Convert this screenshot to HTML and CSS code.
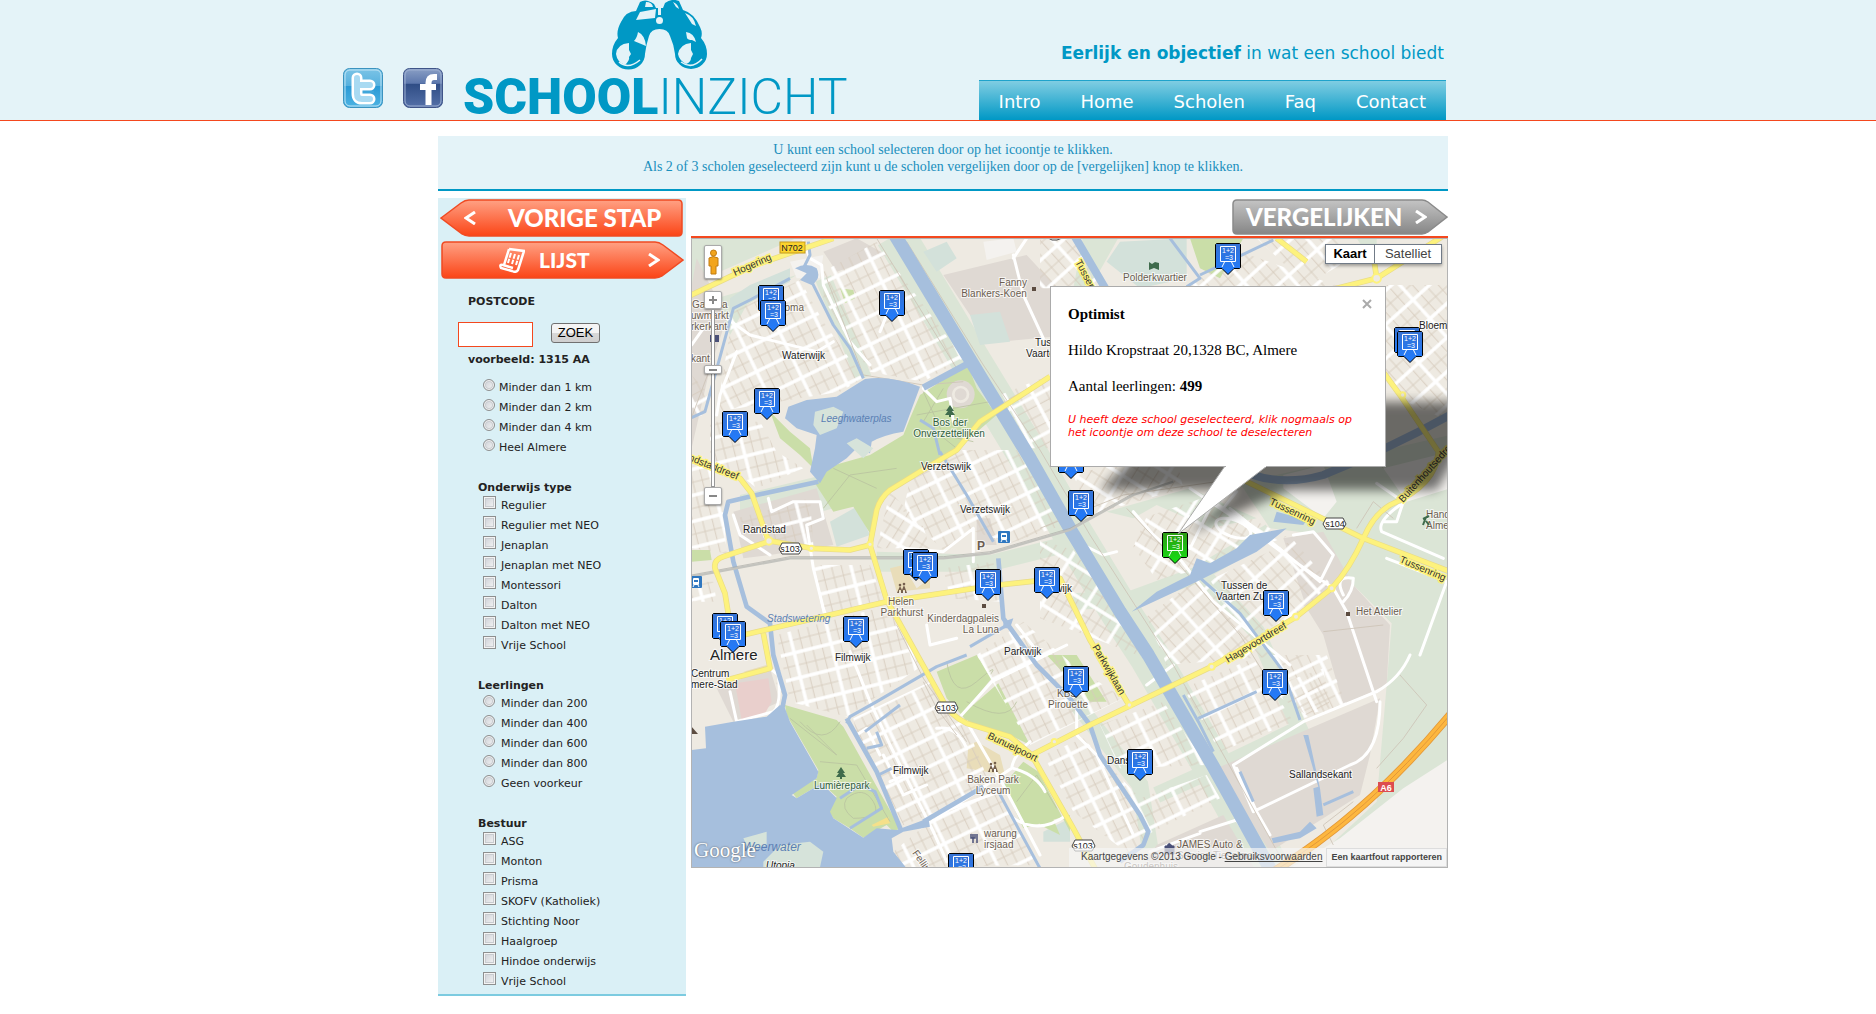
FILE: index.html
```html
<!DOCTYPE html>
<html lang="nl">
<head>
<meta charset="utf-8">
<title>Schoolinzicht</title>
<link rel="stylesheet" href="styles.css">
</head>
<body>
<header class="header">
  <div class="header-inner">
    <div class="social">
      <a href="#" aria-label="Twitter">
        <svg width="40" height="40" viewBox="0 0 40 40">
          <defs><linearGradient id="tw" x2="0" y2="1"><stop offset="0" stop-color="#7cc4e6"/><stop offset=".45" stop-color="#55b0de"/><stop offset=".46" stop-color="#2a9ad6"/><stop offset="1" stop-color="#4db3e2"/></linearGradient></defs>
          <rect x=".5" y=".5" width="39" height="39" rx="6" fill="url(#tw)" stroke="#3b93bf"/>
          <rect x="2" y="2" width="36" height="36" rx="5" fill="none" stroke="#bfe4f5"/>
          <path d="M14 10V26Q14 31 19 31H27M14 17H27" fill="none" stroke="#fff" stroke-width="11" stroke-linecap="round"/>
          <path d="M14 10V26Q14 31 19 31H27M14 17H27" fill="none" stroke="#a9daf2" stroke-width="6" stroke-linecap="round"/>
          <path d="M20 24H31" stroke="#3fa6da" stroke-width="2"/>
        </svg>
      </a>
      <a href="#" aria-label="Facebook">
        <svg width="40" height="40" viewBox="0 0 40 40">
          <defs><linearGradient id="fb" x2="0" y2="1"><stop offset="0" stop-color="#8a9fc5"/><stop offset=".38" stop-color="#5c77ac"/><stop offset=".4" stop-color="#2f4d85"/><stop offset="1" stop-color="#5470a8"/></linearGradient></defs>
          <rect x=".5" y=".5" width="39" height="39" rx="6" fill="url(#fb)" stroke="#3f5488"/>
          <rect x="2" y="2" width="36" height="36" rx="5" fill="none" stroke="#9eb0d2"/>
          <path d="M25.500 37V15Q25.500 9 31 9H34M17 19H33" fill="none" stroke="#fff" stroke-width="6"/>
        </svg>
      </a>
    </div>
    <a class="logo" href="#" aria-label="Schoolinzicht">
      <svg width="390" height="120" viewBox="0 0 390 120">
        <g transform="translate(148 0)">
          <path fill="#0098c5" d="M0 54Q0 45 6 38Q4 31 9 22Q14 11 24 11L28 2Q34-2 42 4L44 8H51L53 3Q60-2 67 1L71 10Q82 13 88 27Q91 33 89 38Q95 45 95 54A16 15 0 0 1 63 54Q62 45 58 36Q56 29 47.500 29Q39 29 37 36Q34 45 33 54A16 15 0 0 1 0 54Z"/>
          <path fill="#e4f3f8" d="M28 12L44 9L43 18L24 20ZM34 2Q40 2 41 7L33 7ZM46 8H49V15H46ZM26 32Q33 35 34 46L22 41Q25 38 26 32ZM74 32Q82 33 84 42L80 40Q76 40 75 38ZM61 2Q66 4 67 9L64 7ZM73 13Q82 16 84 26L80 24ZM17 43Q5 44 4 54Q5 62 13 65Q18 60 17 57L19 54L17 50ZM79 43Q68 44 66 54Q67 60 74 64Q79 62 79 58L81 54L79 50Z"/>
          <circle cx="47.500" cy="20.500" r="3.500" fill="#e4f3f8"/>
          <path d="M7 62Q16 70 28 60M69 62Q80 70 90 59" fill="none" stroke="#e4f3f8" stroke-width="1.500"/>
        </g>
        <text class="logo-text" x="-1" y="114"><tspan class="logo-bold">SCHOOL</tspan><tspan class="logo-light">INZICHT</tspan></text>
      </svg>
    </a>
    <div class="header-right">
      <p class="tagline"><strong>Eerlijk en objectief</strong> in wat een school biedt</p>
      <nav class="nav"><a href="#">Intro</a><a href="#">Home</a><a href="#">Scholen</a><a href="#">Faq</a><a href="#">Contact</a></nav>
    </div>
  </div>
</header>

<main class="page">
  <p class="notice">U kunt een school selecteren door op het icoontje te klikken.<br>Als 2 of 3 scholen geselecteerd zijn kunt u de scholen vergelijken door op de [vergelijken] knop te klikken.</p>
  <div class="columns">
    <form class="sidebar">
      <button type="button" class="arrow arrow-back">
        <svg class="arrow-shape" width="243" height="38" viewBox="0 0 243 38"><defs><linearGradient id="red" x2="0" y2="1"><stop offset="0" stop-color="#ffa184"/><stop offset="1" stop-color="#fb4416"/></linearGradient></defs><path d="M1 19L21 4Q25 1 29 1H238Q242 1 242 5V33Q242 37 238 37H29Q25 37 22 35Z" fill="url(#red)" stroke="#f04a22" stroke-width="1.500"/></svg>
        <svg width="12" height="14" viewBox="0 0 12 14"><path d="M11 1L2 7L11 13" fill="none" stroke="#fff" stroke-width="3"/></svg>
        <span>VORIGE STAP</span>
      </button>
      <button type="button" class="arrow arrow-list">
        <svg class="arrow-shape" width="243" height="38" viewBox="0 0 243 38"><path d="M242 19L222 4Q218 1 214 1H5Q1 1 1 5V33Q1 37 5 37H214Q218 37 221 35Z" fill="url(#red)" stroke="#f04a22" stroke-width="1.500"/></svg>
        <svg width="26" height="26" viewBox="0 0 26 26" fill="none" stroke="#fff"><path d="M10 2L25 4L19 23Q17 26 13 24L2 21Q0 17 4 18L14 21M10 2L5 18" stroke-width="2.500"/><path d="M12 6L9 16M16 7L13 17M20 8L17 18" stroke-width="2" stroke-dasharray="5 1"/></svg>
        <span>LIJST</span>
        <svg class="push" width="12" height="14" viewBox="0 0 12 14"><path d="M1 1L10 7L1 13" fill="none" stroke="#fff" stroke-width="3"/></svg>
      </button>
      <label class="postcode-label" for="postcode">POSTCODE</label>
      <div class="search"><input class="postcode" id="postcode" type="text"><button type="button" class="zoek">ZOEK</button></div>
      <p class="example">voorbeeld: 1315 AA</p>
      <fieldset class="filter filter-distance">
        <label><input type="radio" name="km">Minder dan 1 km</label>
        <label><input type="radio" name="km">Minder dan 2 km</label>
        <label><input type="radio" name="km">Minder dan 4 km</label>
        <label><input type="radio" name="km">Heel Almere</label>
      </fieldset>
      <fieldset class="filter">
        <legend>Onderwijs type</legend>
        <label><input type="checkbox">Regulier</label>
        <label><input type="checkbox">Regulier met NEO</label>
        <label><input type="checkbox">Jenaplan</label>
        <label><input type="checkbox">Jenaplan met NEO</label>
        <label><input type="checkbox">Montessori</label>
        <label><input type="checkbox">Dalton</label>
        <label><input type="checkbox">Dalton met NEO</label>
        <label><input type="checkbox">Vrije School</label>
      </fieldset>
      <fieldset class="filter">
        <legend>Leerlingen</legend>
        <label><input type="radio" name="size">Minder dan 200</label>
        <label><input type="radio" name="size">Minder dan 400</label>
        <label><input type="radio" name="size">Minder dan 600</label>
        <label><input type="radio" name="size">Minder dan 800</label>
        <label><input type="radio" name="size">Geen voorkeur</label>
      </fieldset>
      <fieldset class="filter">
        <legend>Bestuur</legend>
        <label><input type="checkbox">ASG</label>
        <label><input type="checkbox">Monton</label>
        <label><input type="checkbox">Prisma</label>
        <label><input type="checkbox">SKOFV (Katholiek)</label>
        <label><input type="checkbox">Stichting Noor</label>
        <label><input type="checkbox">Haalgroep</label>
        <label><input type="checkbox">Hindoe onderwijs</label>
        <label><input type="checkbox">Vrije School</label>
      </fieldset>
    </form>

    <section class="content">
      <div class="toolbar">
        <button type="button" class="arrow arrow-compare">
          <svg class="arrow-shape" width="216" height="36" viewBox="0 0 216 36"><defs><linearGradient id="grey" x2="0" y2="1"><stop offset="0" stop-color="#c4c4c4"/><stop offset="1" stop-color="#868686"/></linearGradient></defs><path d="M215 18L196 3Q193 1 190 1H5Q1 1 1 5V31Q1 35 5 35H190Q193 35 196 33Z" fill="url(#grey)" stroke="#8a8a8a" stroke-width="1.500"/></svg>
          <span>VERGELIJKEN</span>
          <svg width="12" height="14" viewBox="0 0 12 14"><path d="M1 1L10 7L1 13" fill="none" stroke="#fff" stroke-width="3"/></svg>
        </button>
      </div>
      <div class="map">
        <svg class="map-canvas" viewBox="0 0 757 630" preserveAspectRatio="xMinYMin slice">
          <defs>
            <g id="tile"><path d="M0 38H114M28 0V76M57 0V76M86 0V76" stroke="#d5cbbd" stroke-width="2.500"/><path d="M0 0H114M0 76H114M0 0V76M114 0V76" stroke="#fff" stroke-width="10"/></g>
            <pattern id="pa" width="114" height="76" patternUnits="userSpaceOnUse" patternTransform="rotate(-26)"><use href="#tile"/></pattern>
            <pattern id="pb" width="114" height="76" patternUnits="userSpaceOnUse" patternTransform="rotate(-14)"><use href="#tile"/></pattern>
            <pattern id="pc" width="114" height="76" patternUnits="userSpaceOnUse" patternTransform="rotate(32)"><use href="#tile"/></pattern>
            <pattern id="pd" width="114" height="76" patternUnits="userSpaceOnUse" patternTransform="rotate(-42)"><use href="#tile"/></pattern>
            <pattern id="pe" width="114" height="76" patternUnits="userSpaceOnUse" patternTransform="rotate(62)"><use href="#tile"/></pattern>
            <linearGradient id="pinblue" x2="0" y2="1"><stop offset="0" stop-color="#3672d2"/><stop offset="1" stop-color="#1f7bff"/></linearGradient>
            <linearGradient id="pingreen" x2="0" y2="1"><stop offset="0" stop-color="#2d9a12"/><stop offset="1" stop-color="#15e215"/></linearGradient>
            <g id="board"><path d="M-7.500-28.500H7.500V-13.500H-7.500ZM-3.500-13L-6-8M3.500-13L6-8" fill="none" stroke="#fff"/><text class="sum" x="0" y="-22">1+2</text><text class="sum" x="1" y="-15">=3</text></g>
            <path id="pin" d="M-11.500-31.500H11.500L12.500-30.500V-7.500L11.500-6.500H6L0-.500L-6-6.500H-11.500L-12.500-7.500V-30.500Z" stroke="#000"/>
            <g id="school"><use href="#pin" fill="url(#pinblue)"/><use href="#board"/></g>
            <g id="chosen"><use href="#pin" fill="url(#pingreen)"/><use href="#board"/></g>
            <g id="tree"><path d="M0-6L4 0H2L5 4H1V6H-1V4H-5L-2 0H-4Z" fill="#3f6b4c"/></g>
            <g id="train"><rect x="-6" y="-6" width="12" height="12" rx="1" fill="#2f77c0"/><rect x="-3" y="-4" width="6" height="7" rx="1" fill="#fff"/><path d="M-2-2H2V0H-2Z" fill="#2f77c0"/><path d="M-2 3L-3 5M2 3L3 5" stroke="#fff"/></g>
            <g id="people"><path d="M-5 4L-2-3L0 1L2-4L5 4H3V1H1V4H-1V1H-3V4Z" fill="#75604d"/><circle cx="-2" cy="-4" r="1.300" fill="#75604d"/><circle cx="2" cy="-5" r="1.300" fill="#75604d"/></g>
            <filter id="soft" x="-20%" y="-20%" width="140%" height="140%"><feGaussianBlur stdDeviation="16"/></filter>
          </defs>
          <rect width="757" height="630" fill="#eeeae2"/>
          <g transform="scale(.33333) translate(-3 -9)">
            <!-- green belts and business areas -->
            <path fill="#dbe5d6" d="M0 0H340L0 150ZM1180 0H1290L1200 160H1150ZM1650 745L2280 600V1950H2050L1750 1990L2060 1700L2090 1350L2105 1165L1990 1050L1900 900L1740 880ZM560 950L900 960L1140 900V950L900 1010H560ZM80 190L320 120L170 210L120 300ZM2000 10H2060V100ZM1250 830L1500 760L1700 850L1560 880L1400 810L1330 850ZM150 780L400 720L430 820L150 900Z"/>
            <path fill="none" stroke="#dbe5d6" stroke-width="120" d="M615 0L850 390L1020 670L1145 890L1290 1130L1375 1260L1567 1590L1745 1910"/>
            <path fill="none" stroke="#dbe5d6" stroke-width="50" d="M1150 1100L1330 1090L1520 1020L1740 890M1540 1020L1700 1190L1820 1460M1600 1590L1850 1470M1140 1380L1350 1650L1380 1840M1600 1590L1400 1680M400 130L470 300L520 430"/>
            <path fill="#dfd9d3" d="M20 70L0 180V660L60 400L110 250L80 190ZM760 120L1010 60L1140 200V300L930 320L840 240ZM400 50L500 10L590 60L440 110ZM130 830L380 760L430 930L240 960L160 970ZM1780 910L1900 890L1990 1050L2100 1170L2090 1350L1960 1410L1900 1200L1850 1120ZM1580 1600L2070 1390L2040 1560L2010 1680L1900 1750L1740 1850ZM1400 1830L1600 1740L1700 1910H1350ZM80 1360L240 1300L270 1400L130 1460ZM860 850L900 850L920 930H860Z"/>
            <path fill="#d3e1da" d="M120 190L180 150L300 100V140L190 195L120 225ZM1290 20L1490 10V130L1350 160L1250 80ZM700 50L770 20L800 70L740 110ZM840 240L930 230L960 320L870 330ZM420 860L500 815L540 900L440 935ZM1060 1790L1140 1750V1820L1060 1820Z"/>
            <path fill="#f4f2ef" d="M1780 720L1900 690L1940 800L1900 850L1780 760ZM2080 700L2280 650V760L2150 800ZM2280 1570L2140 1660L1950 1810L1800 1900H2280ZM880 20L970 10L980 50L890 75ZM300 80L400 60L390 130L320 130Z"/>
            <path fill="#e9cfcc" d="M135 1345L235 1330L245 1400L225 1435L155 1455Z"/>
            <!-- parks -->
            <path fill="#cadea8" d="M833 388L860 460L920 540L850 600L800 650L690 710L600 765L560 830L540 895L490 815L430 830L375 745L400 700L540 660L640 600L660 550L690 480ZM285 1410L440 1455L460 1475L630 1780L610 1790L590 1770L520 1808L480 1780L430 1750L415 1725L440 1685L395 1645L320 1690L305 1670L380 1630L385 1605L290 1440ZM740 1310L860 1260L905 1330L815 1440L770 1390ZM925 1345L1020 1530L960 1500L830 1460L815 1440ZM940 1650L1000 1580L1045 1610L1140 1790V1740L1000 1780ZM1070 1260L1200 1400H1250L1160 1260ZM1500 10H1660L1590 130L1530 100ZM240 530L300 590L360 640L370 700L330 660L270 610ZM5 945L60 945L65 975L5 980ZM450 160L490 165L495 190L465 205ZM1050 1660L1110 1800L1050 1770Z"/>
            <path fill="#f5e08a" d="M545 1770L595 1745L600 1765L550 1775Z"/>
            <path fill="#e9ddb9" d="M835 1530L860 1520L930 1560L945 1620L830 1600ZM600 1000L640 990L680 1060L720 1030V1060L620 1070ZM160 1310L230 1290V1315Z"/>
            <circle cx="812" cy="478" r="42" fill="#dfd9d3"/>
            <circle cx="812" cy="478" r="22" fill="none" stroke="#eeeae2" stroke-width="8"/>
            <path fill="none" stroke="#b9c3a0" stroke-width="2.500" d="M700 470L760 600L850 620M760 460L700 560L800 640M680 540L900 500M400 820L480 720L620 700M430 700L560 760M300 1450L440 1560L350 1470M330 1460Q400 1540 450 1460M390 1580L500 1590L600 1760M470 1690Q520 1650 550 1700T490 1750Q450 1720 470 1690M770 1280Q790 1400 860 1340T900 1320M830 1400Q950 1470 980 1400M980 1700L1040 1620L1100 1720"/>
            <!-- residential street grids -->
            <path fill="url(#pa)" d="M130 230L330 135L400 260L520 430L450 470L330 490L80 530L90 470ZM400 110L560 20L640 130L820 370L700 440L540 410L480 320L400 190ZM490 1450L720 1340L830 1470L900 1650L720 1740L640 1770L600 1690L500 1500ZM730 1750L920 1670L1050 1890L640 1897L610 1850ZM1480 1360L1690 1270L1810 1460L1590 1550ZM1740 1260L1910 1260L1970 1410L1840 1450Z"/>
            <path fill="url(#pb)" d="M60 560L210 560L260 650L340 700L200 760L150 720L60 680ZM370 990L540 990L580 1095L400 1145ZM260 1200L600 1110L700 1290L470 1445L300 1400L280 1300ZM5 660L60 690L100 810L110 955L5 940ZM5 1040L70 1040L80 1100L5 1100ZM760 1000L910 980L930 1100L780 1090ZM140 850L360 790L370 930L250 930Z"/>
            <path fill="url(#pa)" d="M660 730L800 645L980 645L1120 870L960 925L840 885L760 945L640 830ZM860 1260L1000 1160L1150 1290L1300 1390L1020 1530ZM1230 1470L1420 1400L1550 1590L1290 1600ZM1060 1560L1180 1510L1350 1690L1550 1620L1590 1690L1370 1800L1320 1860L1150 1730Z"/>
            <path fill="url(#pc)" d="M600 770L700 875L720 940L560 940ZM1370 845L1550 785L1790 905L1570 985L1520 1005L1400 1035L1330 935ZM1050 915L1150 945L1300 1145L1380 1275L1200 1205L1050 1150ZM1150 720L1450 640L1480 760L1200 840Z"/>
            <path fill="url(#pd)" d="M1560 1035L1810 915L1920 1045L1820 1145L1670 1205ZM1370 1145L1530 1025L1750 1265L1610 1275L1430 1290ZM1050 10H1170L1250 160H1050ZM1500 150L1650 50L1950 155V180H1500ZM2080 150H2280V560L2150 500L2080 400ZM1700 10H1950V90L1850 150Z"/>
            <path fill="url(#pe)" d="M930 480L1080 420V640H1020ZM5 420L60 480L40 540L5 550ZM250 1330L290 1400L270 1300ZM1730 1360L1900 1300L1920 1420L1850 1440Z"/>
            <!-- minor roads -->
            <g fill="none" stroke="#fff" stroke-width="9" stroke-linejoin="round" stroke-linecap="round">
              <path d="M340 20L360 70L395 90L400 150L480 320L540 390M5 330L40 280M110 250L180 300L380 350L430 320M80 540L90 480L140 350M235 790L245 830L310 800L390 800L400 850L350 870L370 1000L400 1120L410 1150M130 840L150 900L240 960M850 880V980M850 880L760 950L640 940M1160 885L1180 930L1240 960L1280 950M1330 830L1390 900L1460 960L1570 1100L1800 1290M1500 760L1680 880L1800 970L1930 1060L1970 1130L2020 1280L2060 1400M1580 780L1500 940M1620 820L1890 1040M1810 900L1870 890L1930 960L1890 1040M2060 745L2140 800L2120 860H2080M2130 810Q2060 860 2075 890L2260 970M2090 970L2270 1040L2190 1260M2160 1260Q2130 1330 2060 1370L1840 1460L1630 1590L1690 1730L1980 1590Q2070 1560 2070 1400M1640 1600L1700 1730L1740 1800M120 1370L140 1460L250 1430Q275 1410 265 1320L240 1300M480 1250L540 1400L600 1530L730 1790L770 1880M815 1440L905 1340L1130 1230M830 1460L940 1650L1050 1860M730 1740L930 1670M1160 1420V1500L1220 1560L1330 1800M970 1750Q1050 1800 1130 1740M970 1600Q1040 1620 1065 1670M1020 1520Q970 1560 965 1600L740 1750M1450 1290L1370 1350M1530 1790L1640 1755L1720 1880M1380 1850L1530 1795M700 460L740 500L780 490L790 560M710 1170L720 1230L800 1210M980 1170L1050 1260M970 60L1000 180L1060 310M1010 10L970 70M570 290L590 240L600 200M1640 770L1600 820"/>
              <ellipse cx="1630" cy="880" rx="55" ry="25" transform="rotate(20 1630 880)"/>
              <path d="M500 1500L530 1480L570 1560M580 1560L640 1680L710 1650M600 1640L690 1600M740 1480Q800 1470 830 1540M1960 1080Q1930 1020 1990 1030Q1990 1070 1960 1100"/>
            </g>
            <g fill="none" stroke="#ccc3b6" stroke-width="2.500"><path d="M650 20L880 390L1050 645L1200 900L1450 1290L1790 1900M560 10L800 400M1310 820L1460 980L1650 1200L1750 1360M410 130L520 420L700 450L820 440M1050 880L1300 780L1650 730M2000 880L2050 800L2110 850M2130 1320L2210 1410L2140 1510L2060 1600M1990 1700L1900 1770L1930 1830M700 1340L740 1420L800 1500M620 1170L700 1330L830 1520M0 560L60 400M1960 560L2080 700M1900 1190L2080 1170"/></g>
            <!-- water -->
            <path fill="#a6bfdd" d="M525 432Q600 420 690 455L655 550L640 590Q580 600 545 620L540 655L500 640L470 670L410 710L390 745L360 710L375 640L380 600L320 580L285 550L295 515L350 495L440 485ZM5 1545L48 1540L45 1475L130 1460L230 1445L270 1410L285 1420L300 1460L385 1610L380 1630L305 1680L320 1690L395 1645L440 1690L420 1730L430 1750L520 1808L560 1780L620 1785L715 1750L720 1775L640 1790L605 1810L610 1850L650 1900H5ZM1325 1130L1400 1070L1500 1020L1520 970L1560 985L1640 940L1680 900L1790 880L1740 920L1700 950L1580 1010L1520 1040L1370 1110ZM1760 830L1850 855L1840 870L1750 860ZM1840 1500L1855 1500L1890 1660L1900 1740L1880 1745L1870 1660L1885 1655ZM315 100Q350 80 380 100Q395 130 365 150L330 135L350 115ZM940 1160L970 1150L960 1180H940ZM1745 1810L1830 1790L1860 1760L1880 1780L1830 1810L1750 1825Z"/>
            <path fill="#d6e3da" d="M375 530L430 515L460 530L440 580L390 600L370 570ZM470 625L500 610L550 640L520 670ZM160 1810L230 1790V1830L180 1850ZM220 1880L270 1830L360 1820L400 1850L390 1897H220Z"/>
            <g fill="none" stroke="#a6bfdd" stroke-linejoin="round">
              <path stroke-width="40" d="M615 0L850 390L1020 670L1145 890L1290 1130L1375 1260L1567 1590L1745 1910"/>
              <path stroke-width="24" d="M1140 -20L1240 150L1440 480M1640 700Q1760 760 1900 720Q2100 640 2280 540"/>
              <path stroke-width="20" d="M700 458L835 385"/>
              <path stroke-width="14" d="M385 740L200 780L115 800L105 840L130 980L170 1115L240 1165L250 1260L285 1380L275 1430M470 1450L560 1610L635 1790M700 1760L880 1655M925 970L940 1150L1040 1290L1140 1390L1200 1470L1230 1560L1350 1740L1375 1790L1360 1830L1290 1880"/>
              <path stroke-width="9" d="M5 548L45 530L130 220L180 195L300 130M355 20L360 60L340 100M365 140L430 270L480 340L520 430M830 1260L740 1295L560 1400L480 1445L470 1465M525 1490L630 1410M530 1540L575 1530L560 1490M565 1620L605 1600M920 1660L990 1790L1050 1900M750 650L830 780L910 920M960 1165L840 1235M690 555L730 580L750 660M1520 1020L1650 1135L1780 1310L1830 1455M1480 1380L1525 1460L1570 1550M1525 1450L1700 1370M1440 10L1530 130L1490 155M1530 120L1750 15M1650 1610L1690 1700M1900 1710L1990 1670M450 1690L510 1650L555 1670L575 1720L480 1780"/>
            </g>
            <!-- railway -->
            <path fill="none" stroke="#c3c3be" stroke-width="7" d="M5 1025L300 970L760 970L900 955L1140 885L1330 780L1450 740"/>
            <path fill="none" stroke="#a9a9a4" stroke-width="2" d="M5 1020L300 965L760 965L900 950L1140 880L1330 775"/>
            <!-- main roads -->
            <g fill="none" stroke-linejoin="round">
              <path stroke="#e9dc86" stroke-width="17" d="M0 182L190 92L430 10M5 675L150 730L185 775L235 917L365 940L480 945L540 930L560 825Q570 790 600 765L690 710L800 645L870 560L1080 425M235 920L100 965Q70 975 75 1000L105 1075L125 1200M540 930L590 1095L690 1275L760 1400Q780 1440 830 1465L960 1505L1025 1560L1150 1780L1215 1900M160 1200L590 1100L900 1053L1110 1030L1200 1215L1317 1410M1025 1560L1200 1470L1565 1295L1820 1145L1925 1060Q1980 1000 2020 910Q2050 840 2100 810Q2240 750 2245 650L2130 480L2050 370M1660 735L2020 910L2280 1010M220 1195L240 1300L110 1335M1760 10L1850 80M2280 -10L2060 130L1900 170M2060 130L2050 60"/>
              <path stroke="#fdf27d" stroke-width="13" d="M0 182L190 92L430 10M5 675L150 730L185 775L235 917L365 940L480 945L540 930L560 825Q570 790 600 765L690 710L800 645L870 560L1080 425M235 920L100 965Q70 975 75 1000L105 1075L125 1200M540 930L590 1095L690 1275L760 1400Q780 1440 830 1465L960 1505L1025 1560L1150 1780L1215 1900M160 1200L590 1100L900 1053L1110 1030L1200 1215L1317 1410M1025 1560L1200 1470L1565 1295L1820 1145L1925 1060Q1980 1000 2020 910Q2050 840 2100 810Q2240 750 2245 650L2130 480L2050 370M1660 735L2020 910L2280 1010M220 1195L240 1300L110 1335M1760 10L1850 80M2280 -10L2060 130L1900 170M2060 130L2050 60"/>
              <path stroke="#e2983a" stroke-width="25" d="M1750 1910Q2030 1740 2280 1440"/>
              <path stroke="#fdb73f" stroke-width="20" d="M1750 1910Q2030 1740 2280 1440"/>
              <path stroke="#e2983a" stroke-width="3" d="M1750 1910Q2030 1740 2280 1440"/>
            </g>
            <g fill="#eeeae2" stroke="#fdf27d" stroke-width="6"><circle cx="237" cy="918" r="11"/><circle cx="364" cy="940" r="8"/><circle cx="540" cy="928" r="8"/><circle cx="1093" cy="1520" r="8"/><circle cx="1318" cy="1410" r="8"/><circle cx="1565" cy="1295" r="9"/><circle cx="1818" cy="1145" r="9"/><circle cx="1925" cy="1060" r="9"/><circle cx="2060" cy="130" r="13"/><circle cx="2138" cy="480" r="8"/></g>
          </g>
          <!-- place names and symbols -->
          <g class="labels">
            <text x="1" y="70">Gamma</text><text x="0" y="81">uwmarkt</text><text x="0" y="92">rkerkant</text><text x="0" y="124">kant</text>
            <text class="end" x="113" y="73">Flevoloma</text>
            <text class="place" x="91" y="121">Waterwijk</text>
            <text class="mid" x="322" y="48">Fanny</text><text class="mid" x="303" y="59">Blankers-Koen</text>
            <text class="place" x="344" y="108">Tussen de</text><text class="place" x="335" y="119">Vaarten</text>
            <text x="432" y="43">Polderkwartier</text>
            <text class="place" x="728" y="91">Bloem</text>
            <text class="park mid" x="259" y="188">Bos der</text><text class="park mid" x="258" y="199">Onverzettelijken</text>
            <text class="water" x="130" y="184">Leeghwaterplas</text>
            <text class="place" x="230" y="232">Verzetswijk</text><text class="place" x="269" y="275">Verzetswijk</text>
            <text class="place" x="52" y="295">Randstad</text>
            <text class="water" x="76" y="384">Stadswetering</text>
            <text class="mid" x="210" y="367">Helen</text><text class="mid" x="211" y="378">Parkhurst</text>
            <text class="end" x="308" y="384">Kinderdagpaleis</text><text class="end" x="308" y="395">La Luna</text>
            <text class="place" x="313" y="417">Parkwijk</text><text class="place end" x="381" y="354">Parkwijk</text>
            <text class="city" x="19" y="422">Almere</text>
            <text class="place" x="144" y="423">Filmwijk</text>
            <text class="place" x="0" y="439">Centrum</text><text class="place" x="0" y="450">mere-Stad</text>
            <text class="place" x="202" y="536">Filmwijk</text>
            <text class="park" x="123" y="551">Lumièrepark</text>
            <text class="mid" x="302" y="545">Baken Park</text><text class="mid" x="302" y="556">Lyceum</text>
            <text x="293" y="599">warung</text><text x="293" y="610">irsjaad</text>
            <text class="water big" x="52" y="613">Weerwater</text>
            <text class="place" x="75" y="631" font-style="italic">Utopia</text>
            <text class="mid" x="376" y="459">KBS</text><text class="mid" x="377" y="470">Pirouette</text>
            <text class="place" x="416" y="526">Danswijk</text>
            <text class="place" x="598" y="540">Sallandsekant</text>
            <text x="486" y="610">JAMES Auto &amp;</text><text x="486" y="621">Service Tieselman</text><text x="433" y="632">Goudenhuis</text>
            <text class="place" x="530" y="351">Tussen de</text><text class="place" x="525" y="362">Vaarten Zuid</text>
            <text x="665" y="377">Het Atelier</text><text x="735" y="280">Handbal</text><text x="735" y="291">Almere</text>
            <rect x="341" y="49" width="4" height="4" fill="#5c4c40"/><rect x="291" y="366" width="4" height="4" fill="#5c4c40"/><rect x="655" y="374" width="4" height="4" fill="#5c4c40"/>
            <rect x="19" y="97" width="9" height="7" fill="#4a5078"/><path d="M0 488V496L7 496Z" fill="#5c4c40"/>
            <path d="M458 24L461 26L464 24L468 25V32L463 30L458 32Z" fill="#3f6b4c"/><path d="M732 281L738 278M735 279L732 287M735 283L738 287" stroke="#3f6b4c" stroke-width="2"/>
            <use href="#tree" x="259" y="173"/><use href="#tree" x="150" y="535"/>
            <use href="#train" x="313" y="299"/><use href="#train" x="5" y="344"/>
            <use href="#people" x="211" y="351"/><use href="#people" x="302" y="530"/>
            <text class="parking" x="286" y="312">P</text>
            <path d="M282 596V605M286 596V605M280 596V600H284V596" fill="none" stroke="#4a5078" stroke-width="1.500"/>
            <path d="M474 608H483V616H474ZM476 608Q478 603 481 608" fill="#4a5078" stroke="#4a5078"/>
            <rect x="89" y="4" width="25" height="11" fill="#fbd32d" stroke="#c49a1f"/><text class="code" x="101" y="13">N702</text>
            <rect x="687" y="544" width="16" height="10" fill="#dd4b4e"/><text class="code motorway" x="695" y="553">A6</text>
            <g class="shield"><path d="M91 305H108L111 311L108 316H91L88 311Z"/><path d="M247 464H264L267 470L264 475H247L244 470Z"/><path d="M635 280H652L655 286L652 291H635L632 286Z"/><path d="M384 602H401L404 608L401 613H384L381 608Z"/><path d="M357 0H371L366 2H361Z"/></g>
            <text class="code" x="99" y="314">s103</text><text class="code" x="255" y="473">s103</text><text class="code" x="644" y="289">s104</text><text class="code" x="392" y="611">s103</text>
            <text class="road" transform="translate(44 38) rotate(-24)">Hogering</text>
            <text class="road" transform="translate(-3 222) rotate(22)">ndstaddreef</text>
            <text class="road" transform="translate(384 24) rotate(62)">Tussen</text>
            <text class="road" transform="translate(296 500) rotate(26)">Bunuelpoort</text>
            <text class="road" transform="translate(401 409) rotate(60)">Parkwijklaan</text>
            <text class="road" transform="translate(537 425) rotate(-31)">Hagevoortdreef</text>
            <text class="road" transform="translate(578 266) rotate(25)">Tussenring</text>
            <text class="road" transform="translate(708 324) rotate(23)">Tussenring</text>
            <text class="road" transform="translate(712 265) rotate(-48)">Buitenhoutsedreef</text>
            <text transform="translate(221 615) rotate(55)">Fellinistraat</text>
          </g>
          <path transform="scale(.33333) translate(-3 -9)" filter="url(#soft)" opacity=".55" d="M1230 765L1500 500H2330L2300 660L2240 765H1800L1490 900L1640 765Z"/>
          <g>
            <use href="#school" x="80" y="79"/><use href="#school" x="82" y="94"/><use href="#school" x="201" y="84"/><use href="#school" x="76" y="182"/><use href="#school" x="44" y="205"/>
            <use href="#school" x="537" y="37"/><use href="#school" x="716" y="121"/><use href="#school" x="719" y="125"/>
            <use href="#school" x="225" y="343"/><use href="#school" x="234" y="346"/><use href="#school" x="297" y="363"/><use href="#school" x="356" y="361"/>
            <use href="#school" x="34" y="407"/><use href="#school" x="42" y="415"/><use href="#school" x="165" y="410"/>
            <use href="#school" x="380" y="241"/><use href="#school" x="390" y="284"/><use href="#school" x="585" y="384"/>
            <use href="#school" x="385" y="460"/><use href="#school" x="584" y="463"/><use href="#school" x="449" y="543"/><use href="#school" x="270" y="647"/>
            <use href="#chosen" x="484" y="326"/>
          </g>
          <path d="M534 228L487 296L576 228Z" fill="#fff"/><path d="M534 228L487 296L576 228" fill="none" stroke="#ababab"/>
        </svg>

        <button type="button" class="pegman" aria-label="Street View"><svg width="11" height="26" viewBox="0 0 11 26"><path d="M1 9Q5 6 10 9V17H8V25H3V17H1Z" fill="#f2a51c" stroke="#c07c10"/><circle cx="5.500" cy="4" r="3" fill="#f2a51c" stroke="#c07c10"/></svg></button>
        <div class="zoom">
          <button type="button" aria-label="Inzoomen"><svg width="10" height="10"><path d="M1 5H9M5 1V9" stroke="#888" stroke-width="2"/></svg></button>
          <div class="zoom-track"><span class="zoom-handle"></span></div>
          <button type="button" aria-label="Uitzoomen"><svg width="10" height="10"><path d="M1 5H9" stroke="#888" stroke-width="2"/></svg></button>
        </div>
        <div class="maptype"><button type="button" class="active">Kaart</button><button type="button">Satelliet</button></div>
        <div class="infowindow">
          <button type="button" class="close" aria-label="Sluiten"><svg width="10" height="10"><path d="M1 1L9 9M9 1L1 9" stroke="#aaa" stroke-width="2"/></svg></button>
          <p><strong>Optimist</strong></p>
          <p>Hildo Kropstraat 20,1328 BC, Almere</p>
          <p>Aantal leerlingen: <strong>499</strong></p>
          <p class="warning">U heeft deze school geselecteerd, klik nogmaals op het icoontje om deze school te deselecteren</p>
        </div>
        <span class="google">Google</span>
        <div class="credits"><span class="copyright">Kaartgegevens ©2013 Google - <a href="#">Gebruiksvoorwaarden</a></span><a class="report" href="#">Een kaartfout rapporteren</a></div>
      </div>
    </section>
  </div>
</main>
</body>
</html>
```
FILE: styles.css
```css
* { box-sizing: border-box; }
body { margin: 0; background: #fff; color: #222; font: 11px/20px "DejaVu Sans", Verdana, sans-serif; }
p { margin: 0; }
a { color: inherit; text-decoration: none; }
button { font: inherit; color: inherit; padding: 0; cursor: pointer; }
svg { display: block; }

.header { background: #e4f3f8; border-bottom: 1px solid #f4481e; }
.header-inner { display: flex; align-items: flex-end; max-width: 1190px; margin: 0 auto; padding-right: 87px; }
.social { display: flex; gap: 20px; margin: 0 21px 12px 0; }
.logo-text { fill: #0098c5; font-family: Roboto, sans-serif; font-size: 50px; }
.logo-bold { font-weight: 900; }
.logo-light { font-weight: 300; }
.header-right { margin-left: auto; color: #0098c5; }
.tagline { padding: 0 2px 17px; font-size: 17px; line-height: 20px; text-align: right; }
.nav { display: flex; height: 40px; border-top: 1px solid #1fa3cb; background: linear-gradient(#80cde2, #0098c5); }
.nav a { padding: 0 20px; color: #fff; font-size: 18px; line-height: 42px; }

.page { max-width: 1020px; margin: 0 auto; padding: 15px 0 18px 10px; }
.notice { padding: 5px 0 14px; border-bottom: 2px solid #0098c5; background: #e4f3f8; color: #1a8fbd; font: 14px/17px "Liberation Serif", serif; text-align: center; }
.columns { display: flex; align-items: flex-start; gap: 5px; margin-top: 7px; }

.sidebar { flex: 0 0 248px; padding: 1px 0 2px; border-bottom: 2px solid #7ccbe0; background: #daf0f6; }
.arrow { position: relative; display: flex; align-items: center; width: 243px; height: 38px; border: 0; background: none; color: #fff; font: 900 24px/38px Lato, sans-serif; }
.arrow-shape { position: absolute; inset: 0; z-index: 0; }
.arrow > :not(.arrow-shape) { position: relative; }
.arrow-back { gap: 32px; margin-left: 2px; padding-left: 24px; }
.arrow-list { gap: 14px; margin: 4px 0 0 3px; padding: 0 24px 0 58px; font-size: 21px; }
.push { margin-left: auto; }
.postcode-label { display: block; margin: 13px 0 0 30px; font-weight: bold; }
.search { display: flex; gap: 18px; margin: 10px 0 3px 20px; }
.postcode { width: 75px; height: 25px; border: 1px solid #f4481e; background: #fff; }
.zoek { width: 49px; height: 20px; margin-top: 1px; border: 1px solid #707070; border-radius: 3px; background: linear-gradient(#f4f4f4 50%, #d8d8d8 50%, #cfcfcf); color: #000; font: 13px/18px "Liberation Sans", Arial, sans-serif; }
.example { margin-left: 30px; font-weight: bold; }
.filter { min-width: 0; margin: 20px 0 0 40px; padding: 0; border: 0; }
.filter-distance { margin-top: 8px; }
.filter legend { padding: 1px 0 0; font-weight: bold; line-height: 17px; }
.filter label { display: flex; align-items: flex-start; gap: 5px; padding-left: 5px; }
.filter input { appearance: none; width: 13px; height: 13px; margin: 0; border: 1px solid #8e8f8f; background: linear-gradient(135deg, #cbcfd5, #f6f6f6); box-shadow: inset 0 0 0 1px #f4f4f4, inset 0 0 0 2px #c9ccd0; }
.filter input[type="radio"] { width: 12px; height: 12px; margin: 1px 1px 0 0; border-radius: 50%; }
.filter-distance label { gap: 3px; }

.content { flex: 1; min-width: 0; }
.toolbar { display: flex; justify-content: flex-end; height: 38px; padding-top: 1px; }
.arrow-compare { gap: 13px; width: 216px; height: 36px; padding-left: 14px; line-height: 36px; }
.map { position: relative; height: 632px; border-top: 2px solid #f4481e; overflow: hidden; font-family: "Liberation Sans", Arial, sans-serif; }
.map::after { content: ""; position: absolute; inset: 0; border: 1px solid #b3b3b3; pointer-events: none; }
.map-canvas { width: 100%; height: 630px; }
.labels text { fill: #6b5d50; font-size: 10px; stroke: #fff; stroke-width: 2px; stroke-opacity: .7; paint-order: stroke; }
.labels .place { fill: #222; }
.labels .park { fill: #2f5e3d; }
.labels .water { fill: #5b7fb4; stroke: none; font-style: italic; }
.labels .big { font-size: 12px; }
.labels .city { fill: #222; font-size: 15px; }
.labels .road { fill: #333; stroke: #fdf27d; stroke-opacity: 1; stroke-width: 3px; }
.labels .code { fill: #222; stroke: none; font-size: 9px; text-anchor: middle; }
.labels .motorway { fill: #fff; font-weight: bold; }
.labels .parking { font-size: 12px; font-weight: bold; }
.labels .mid { text-anchor: middle; }
.labels .end { text-anchor: end; }
.shield path { fill: #fff; stroke: #444; }
.sum { fill: #fff; font-size: 7px; text-anchor: middle; }

.pegman, .zoom button, .zoom-handle { display: flex; align-items: center; justify-content: center; width: 18px; border: 1px solid #aaa; border-radius: 2px; background: #fff; box-shadow: 0 1px 2px #0006; }
.pegman { position: absolute; left: 13px; top: 7px; height: 34px; }
.zoom { position: absolute; left: 13px; top: 53px; display: flex; flex-direction: column; }
.zoom button { height: 18px; }
.zoom-track { width: 4px; height: 178px; margin: 0 auto; padding-top: 55px; border: 1px solid #999; background: #fff; }
.zoom-handle { height: 9px; margin-left: -8px; }
.zoom-handle::before { content: ""; width: 8px; height: 2px; background: #888; }
.maptype { position: absolute; top: 6px; right: 6px; display: flex; box-shadow: 0 2px 3px #0005; }
.maptype button { width: 68px; height: 20px; border: 1px solid #717b87; background: #fff; color: #444; font-size: 13px; line-height: 18px; }
.maptype .active { width: 50px; margin-right: -1px; color: #000; font-weight: bold; }
.infowindow { position: absolute; left: 359px; top: 48px; width: 336px; height: 181px; padding: 18px 17px; border: 1px solid #ababab; background: #fff; color: #000; font: 15px/18px "Liberation Serif", serif; }
.infowindow p { margin-bottom: 18px; }
.infowindow .warning { margin: 0; color: #f00; font: italic 11px/13px "DejaVu Sans", Verdana, sans-serif; }
/* opens the lower edge where the pointer joins the balloon */
.infowindow::after { content: ""; position: absolute; left: 175px; bottom: -1px; width: 40px; height: 1px; background: #fff; }
.close { position: absolute; top: 12px; right: 13px; border: 0; background: none; }
.google { position: absolute; left: 3px; bottom: 6px; color: #fff; font: 21px/24px "Liberation Serif", serif; text-shadow: 0 0 2px #555; }
.credits { position: absolute; right: 1px; bottom: 1px; display: flex; color: #444; font-size: 10px; line-height: 18px; background: #f5f5f5b0; }
.copyright { padding: 0 4px 0 12px; }
.copyright a { text-decoration: underline; }
.report { padding: 0 4px; border: 1px solid #ddd; background: #f5f5f5; font-size: 9px; font-weight: bold; line-height: 17px; }
```
